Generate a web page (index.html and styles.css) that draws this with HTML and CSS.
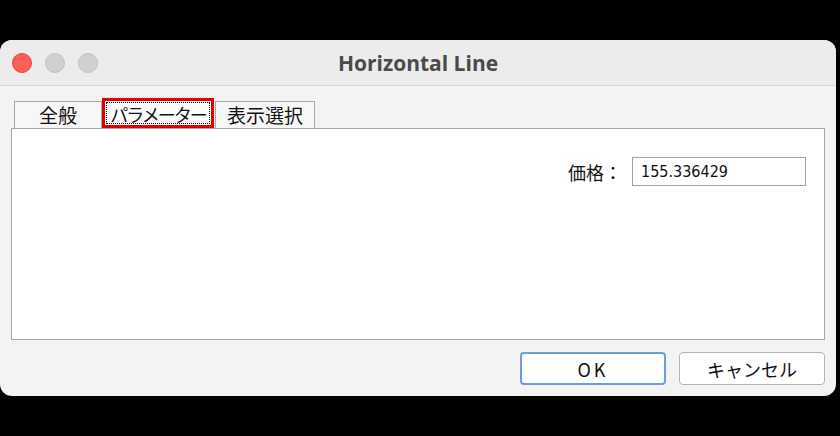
FILE: index.html
```html
<html>
<head>
  <title>Horizontal Line</title>
  <link rel="stylesheet" href="styles.css">
</head>
<body>
  <div class="window">
    <div class="titlebar">
      <div class="lights">
        <span class="light close"></span>
        <span class="light"></span>
        <span class="light"></span>
      </div>
      <div class="title">Horizontal Line</div>
    </div>

    <div class="tabs">
      <div class="tab">全般</div>
      <div class="tab selected"><span class="focus">パラメーター</span></div>
      <div class="tab">表示選択</div>
    </div>

    <div class="panel">
      <div class="field">
        <label for="price">価格：</label>
        <input id="price" type="text" value="155.336429">
      </div>
    </div>

    <div class="actions">
      <button class="btn default">OK</button>
      <button class="btn">キャンセル</button>
    </div>
  </div>
</body>
</html>
```

FILE: styles.css
```css
body {
  margin: 0;
  background: #000;
  padding-top: 40px;
  font-family: "Noto Sans CJK JP", sans-serif;
}
.window {
  width: 836px;
  height: 356px;
  background: #f3f3f3;
  border-radius: 12px;
  overflow: hidden;
}
.titlebar {
  height: 45px;
  background: #ececec;
  border-bottom: 1px solid #d6d6d6;
  display: flex;
  align-items: center;
  position: relative;
}
.lights {
  display: flex;
  gap: 13px;
  padding-left: 12px;
  padding-top: 1px;
}
.light {
  width: 20px;
  height: 20px;
  border-radius: 50%;
  background: #d0d0d0;
  box-sizing: border-box;
  border: 1px solid #c2c2c2;
}
.light.close {
  background: #fe5f57;
  border-color: #e4463f;
}
.title {
  position: absolute;
  left: 0;
  right: 0;
  text-align: center;
  font-family: "Open Sans", sans-serif;
  font-weight: 700;
  font-size: 21px;
  color: #4a4a4a;
}
.tabs {
  display: flex;
  align-items: flex-end;
  margin-top: 12px;
  padding-left: 14px;
  height: 30px;
}
.tab {
  height: 27px;
  box-sizing: border-box;
  border: 1px solid #a8a8a8;
  border-bottom: none;
  background: #f7f7f7;
  font-size: 19px;
  line-height: 26px;
  color: #111;
  text-align: center;
  white-space: nowrap;
  width: 88px;
}
.tab:nth-child(3) {
  width: 100px;
  margin-left: 1px;
}
.tab.selected {
  height: 30px;
  width: 112px;
  border: 3px solid #e00000;
  background: #fff;
  padding: 1px;
  line-height: 22px;
}
.focus {
  display: block;
  height: 100%;
  box-sizing: border-box;
  border: 1px dotted #000;
  font-size: 18px;
  letter-spacing: -2px;
}
.panel {
  margin: 0 11px;
  height: 212px;
  box-sizing: border-box;
  background: #fff;
  border: 1px solid #a6a6a6;
  display: flex;
  justify-content: flex-end;
  padding: 28px 18px 0 0;
}
.field {
  display: flex;
  align-items: center;
  height: 29px;
}
.field label {
  font-size: 18px;
  color: #111;
  margin-right: 10px;
}
.field input {
  width: 174px;
  height: 29px;
  box-sizing: border-box;
  border: 1px solid #a0a0a0;
  padding: 0 8px;
  font-family: "Liberation Sans Narrow", "DejaVu Sans Condensed", sans-serif;
  font-size: 16px;
  color: #111;
  outline: none;
}
.actions {
  display: flex;
  justify-content: flex-end;
  gap: 13px;
  padding: 12px 11px 0 0;
}
.btn {
  width: 146px;
  height: 33px;
  background: #fff;
  border: 1px solid #b4b4b4;
  border-radius: 4px;
  font-family: "Noto Sans CJK JP", sans-serif;
  font-size: 18px;
  color: #111;
  padding: 0;
}
.btn.default {
  border: 2px solid #6b9ee0;
  letter-spacing: 3px;
}
```
